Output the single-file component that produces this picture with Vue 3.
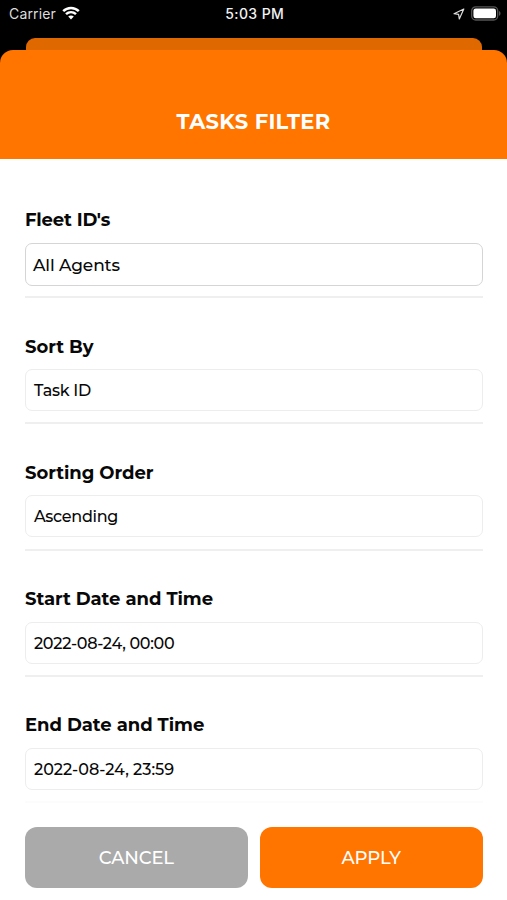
<script setup>
const fields = [
  { id: 'fleet', label: "Fleet ID's", value: 'All Agents' },
  { id: 'sort', label: 'Sort By', value: 'Task ID' },
  { id: 'order', label: 'Sorting Order', value: 'Ascending' },
  { id: 'start', label: 'Start Date and Time', value: '2022-08-24, 00:00' },
  { id: 'end', label: 'End Date and Time', value: '2022-08-24, 23:59' }
]
</script>

<template>
  <div class="screen">
    <div class="status">
      <div class="carrier">
        <span>Carrier</span>
        <svg class="wifi" viewBox="0 0 18 14" width="18" height="14">
          <path d="M1.2 5.2C5.6.9 12.4.9 16.8 5.2" />
          <path d="M4 8.2c2.9-2.7 7.1-2.7 10 0" />
          <path class="dot" d="M9 13.4 6.2 10.6c1.6-1.4 4-1.4 5.6 0z" />
        </svg>
      </div>
      <div class="clock">5:03 PM</div>
      <div class="indicators">
        <svg class="location" viewBox="0 0 12 12" width="12" height="12">
          <path d="M10.8 1 1 5.7l4.6.6.7 4.6z" />
        </svg>
        <svg viewBox="0 0 30 15" width="30" height="15">
          <rect class="shell" x=".7" y=".8" width="26" height="13.2" rx="4" />
          <rect class="charge" x="2.4" y="2.5" width="22.6" height="9.8" rx="2.3" />
          <path class="tip" d="M28 5c2 .8 2 4 0 4.8z" />
        </svg>
      </div>
    </div>
    <div class="back-card"></div>
    <header class="header"><h1>TASKS FILTER</h1></header>
    <main class="form">
      <section v-for="f in fields" :key="f.id" class="field" :class="f.id">
        <label>{{ f.label }}</label>
        <div class="box"><span>{{ f.value }}</span></div>
        <div class="rule"></div>
      </section>
    </main>
    <footer class="actions">
      <button class="cancel">CANCEL</button>
      <button class="apply">APPLY</button>
    </footer>
  </div>
</template>

<style>
body { background: #fff; }
</style>

<style scoped>
.screen {
  width: 507px;
  height: 900px;
  overflow: hidden;
  display: flex;
  flex-direction: column;
  background: linear-gradient(#000 0 80px, #fff 80px);
  color: #080808;
  font-family: Montserrat, Inter, sans-serif;
}
.status {
  height: 38px;
  flex: none;
  display: grid;
  grid-template-columns: 1fr auto 1fr;
  align-items: start;
  padding: 4px 6.5px 0 9px;
  box-sizing: border-box;
  color: #f2f2f2;
  font-family: Inter, sans-serif;
  font-size: 14px;
  line-height: 20px;
}
.carrier { display: flex; gap: 6px; color: #ddd; letter-spacing: 0.15px; }
.carrier span { width: 47px; white-space: nowrap; }
.wifi { margin-top: 2px; fill: none; stroke: #fff; stroke-width: 2.5; }
.wifi .dot { fill: #fff; stroke: none; }
.clock { font-weight: 500; letter-spacing: 0.4px; }
.indicators { display: flex; justify-content: flex-end; gap: 6px; padding-top: 2px; }
.location { margin-top: 2px; fill: none; stroke: #ddd; stroke-width: 1.2; stroke-linejoin: round; }
.shell { fill: #000; stroke: #555; stroke-width: 1.3; }
.charge { fill: #fff; }
.tip { fill: #555; }
.back-card {
  flex: none;
  height: 12px;
  margin: 0 25px 0 26px;
  border-radius: 9px 9px 0 0;
  background: #df6800;
}
.header {
  flex: none;
  height: 109.4px;
  box-sizing: border-box;
  padding-top: 58px;
  border-radius: 13px 13px 0 0;
  background: #ff7500;
  text-align: center;
}
h1 { margin: 0; color: #fff; font-size: 21px; line-height: 28px; font-weight: 700; letter-spacing: 0.3px; }
.form { flex: none; padding: 12.3px 24.5px 0 25px; }
.field { height: 126.25px; padding-top: 37.8px; box-sizing: border-box; }
label { display: block; height: 22px; line-height: 22px; font-size: 18px; font-weight: 700; white-space: nowrap; letter-spacing: -0.05px; }
.fleet label { letter-spacing: -0.15px; }
.box {
  height: 42px;
  margin-top: 11.5px;
  margin-bottom: 11.2px;
  box-sizing: border-box;
  display: flex;
  align-items: center;
  padding-left: 8px;
  border: 1px solid #ededed;
  border-radius: 7px;
  font-size: 16px;
  font-weight: 500;
  letter-spacing: -0.28px;
}
.start .box, .end .box { padding-top: 1px; }
.start .box { letter-spacing: -0.3px; }
.end .box { letter-spacing: 0; }
.fleet .box { height: 43px; margin-bottom: 10.2px; padding-top: 1px; padding-left: 7px; border-color: #d5d5d5; font-size: 17px; letter-spacing: -0.12px; }
.rule { height: 2px; background: #efefef; }
.end .rule { background: #fcfcfc; }
.actions { flex: none; display: grid; grid-template-columns: 1fr 1fr; gap: 12px; padding: 24px 24.5px 0 25px; }
button {
  height: 61px;
  border: 0;
  padding: 2px 0 0;
  border-radius: 12px;
  color: #fff;
  font: 500 18px/24px Montserrat, Inter, sans-serif;
  letter-spacing: -0.15px;
}
.cancel { background: #aaa; }
.apply { background: #ff7500; }
</style>
